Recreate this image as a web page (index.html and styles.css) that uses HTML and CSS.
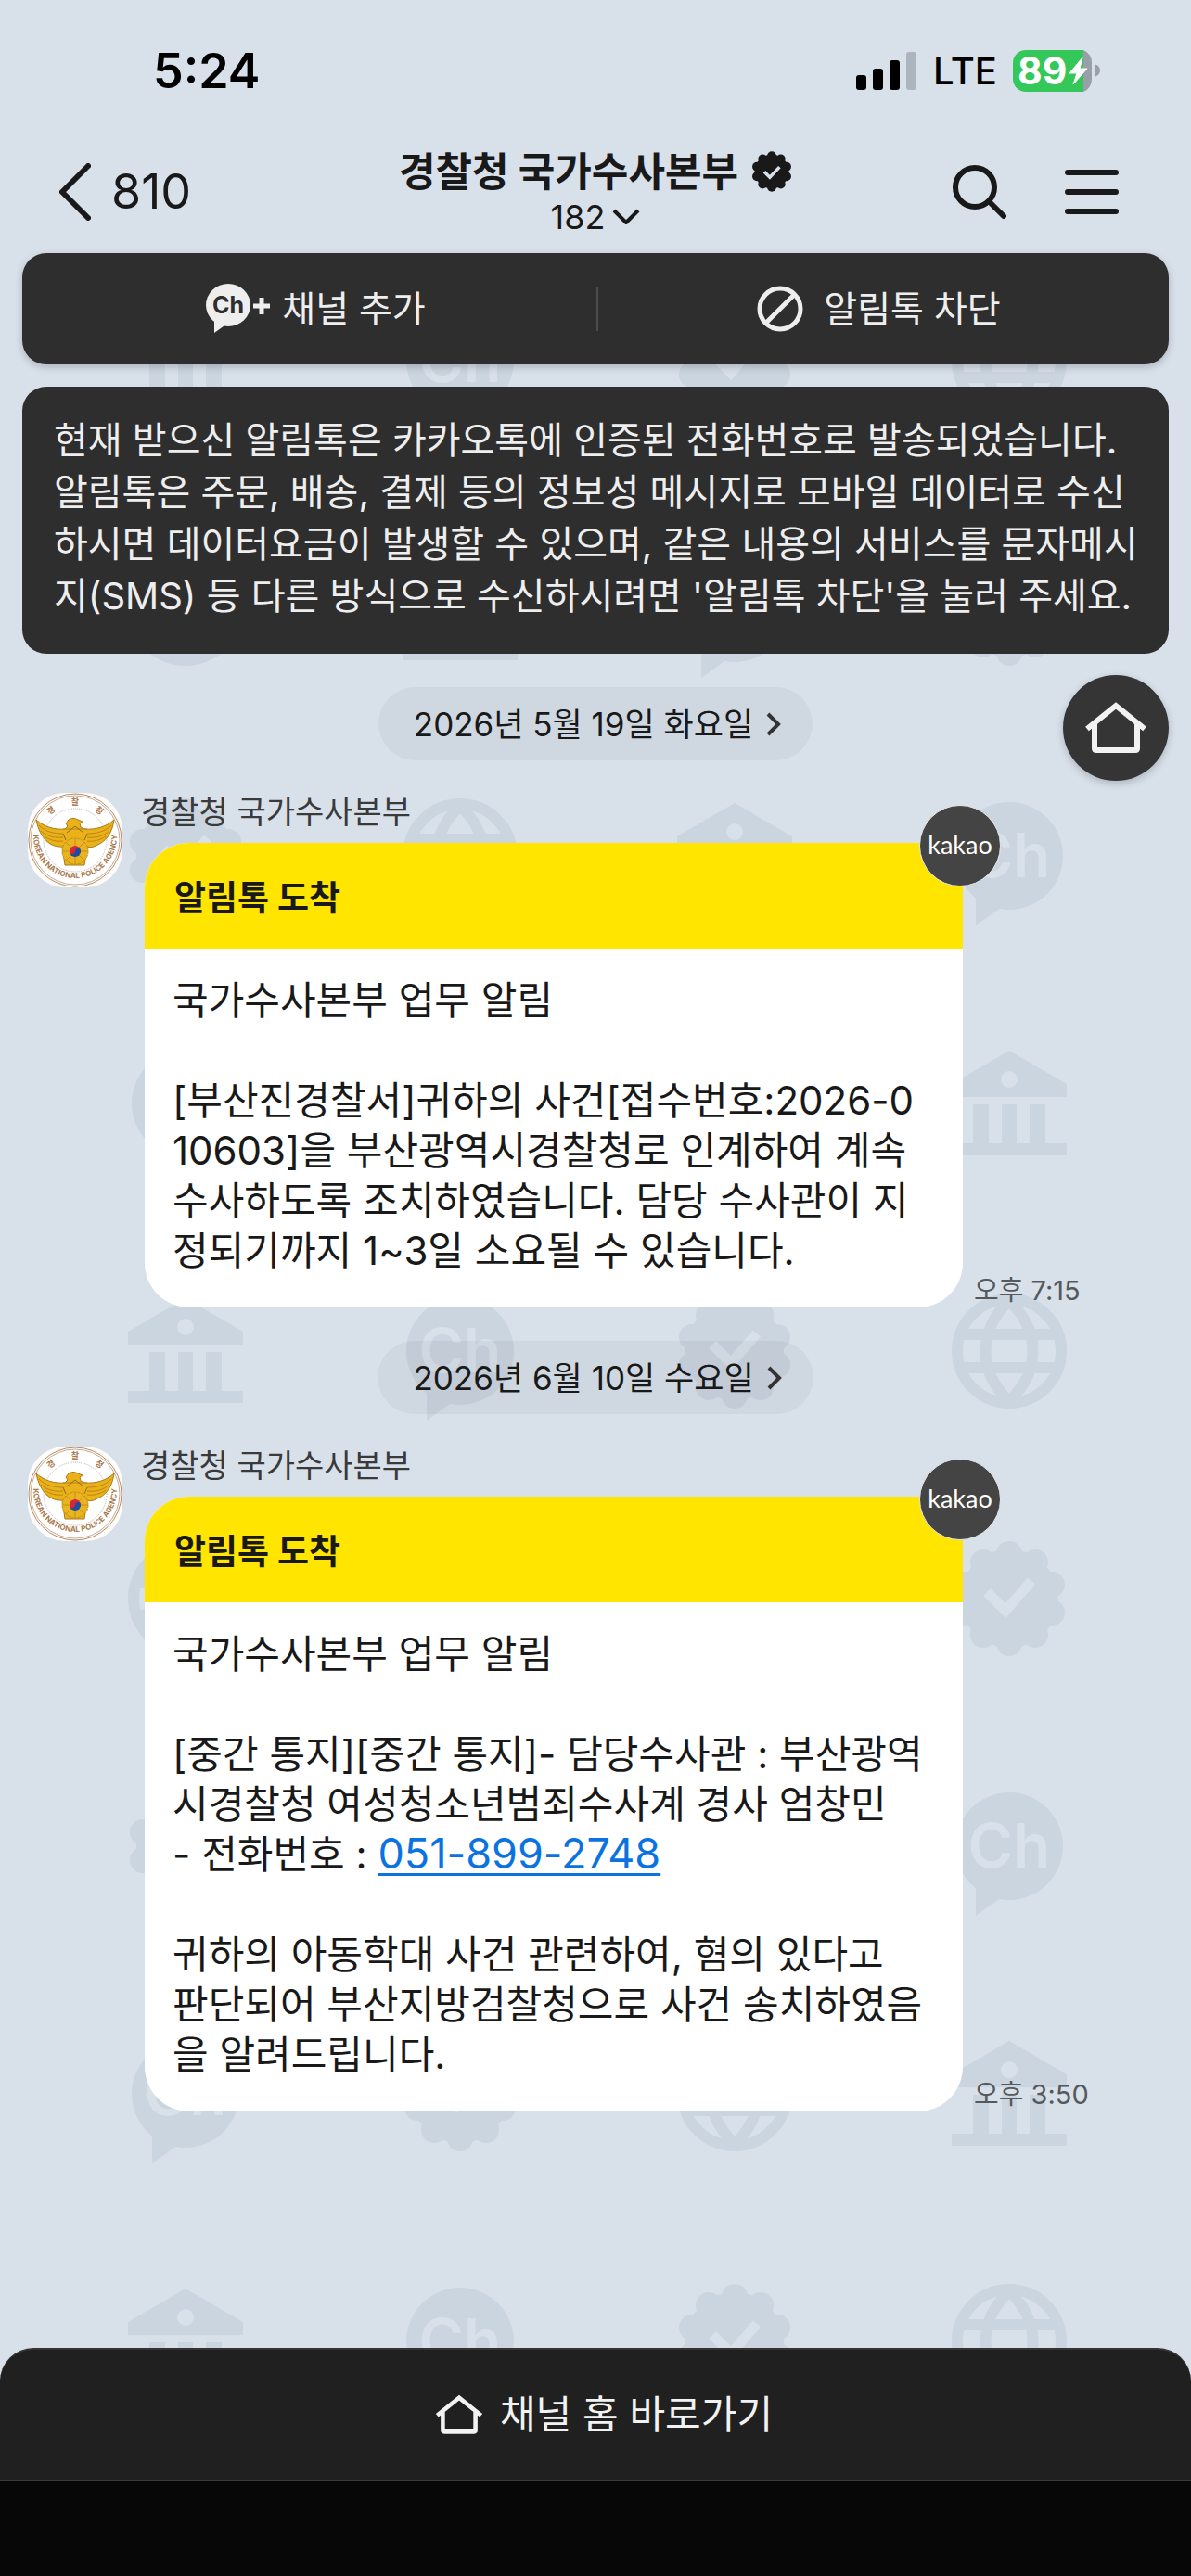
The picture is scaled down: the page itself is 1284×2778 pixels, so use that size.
FILE: index.html
```html
<!DOCTYPE html>
<html lang="ko">
<head>
	<meta charset="UTF-8">
	<meta name="viewport" content="width=device-width">
	<title>경찰청 국가수사본부</title>
	<link rel="stylesheet" href="styles.css">
</head>
<body>
	<svg class="defs" aria-hidden="true">
		<defs>
			<symbol id="home" viewBox="0 0 68 58">
				<path d="M3 30 34 5l31 25M11 25v26q0 2 2 2h42q2 0 2-2V25" fill="none" stroke="currentColor" stroke-width="6"/>
			</symbol>
			<g id="seal">
				<circle r="53"/>
				<circle cx="0" cy="-48" r="14"/><circle cx="28" cy="-39" r="14"/><circle cx="46" cy="-15" r="14"/>
				<circle cx="46" cy="15" r="14"/><circle cx="28" cy="39" r="14"/><circle cx="0" cy="48" r="14"/>
				<circle cx="-28" cy="39" r="14"/><circle cx="-46" cy="15" r="14"/><circle cx="-46" cy="-15" r="14"/><circle cx="-28" cy="-39" r="14"/>
			</g>
			<g id="w-seal">
				<use href="#seal"/>
				<path class="cut" d="m-24-7 20 20L24-19" stroke-width="11"/>
			</g>
			<g id="w-bank">
				<path d="M0-57 62-21V-7H-62V-21zM-39 1h17v42h-17zM-8 1H8v42H-8zM22 1h17v42H22zM-62 43H62V56H-62z"/>
				<circle class="hole" cy="-26" r="9"/>
			</g>
			<g id="w-ch">
				<circle r="58"/>
				<path d="M-36 40v35l28-20z"/>
				<text y="23">Ch</text>
			</g>
			<g id="w-globe">
				<circle r="56" class="line"/>
				<path class="line" d="M-52-18H52M-52 18H52M0-54C-34-22-34 22 0 54M0-54C34-22 34 22 0 54"/>
			</g>
			<pattern id="wall" x="52" y="-17" width="1184" height="1068" patternUnits="userSpaceOnUse">
				<use href="#w-bank" x="148" y="133"/><use href="#w-ch" x="444" y="133"/><use href="#w-seal" x="740" y="133"/><use href="#w-globe" x="1036" y="133"/>
				<use href="#w-globe" x="148" y="400"/><use href="#w-bank" x="444" y="400"/><use href="#w-ch" x="740" y="400"/><use href="#w-seal" x="1036" y="400"/>
				<use href="#w-seal" x="148" y="667"/><use href="#w-globe" x="444" y="667"/><use href="#w-bank" x="740" y="667"/><use href="#w-ch" x="1036" y="667"/>
				<use href="#w-ch" x="148" y="934"/><use href="#w-seal" x="444" y="934"/><use href="#w-globe" x="740" y="934"/><use href="#w-bank" x="1036" y="934"/>
			</pattern>
			<symbol id="emblem" viewBox="0 0 102 102">
				<rect width="102" height="102" rx="40" fill="#fefdfb"/>
				<circle cx="51" cy="51" r="50" fill="#fff" stroke="#b58a66" stroke-width="1"/>
				<circle cx="51" cy="51" r="48" fill="none" stroke="#c9a98b" stroke-width="1"/>
				<circle cx="51" cy="51" r="34" fill="none" stroke="#b9b0a8" stroke-width="1" stroke-dasharray="1 1"/>
				<path id="ring" d="M6 42a45 45 0 0 0 90 0" transform="translate(0 5)" fill="none"/>
				<text class="em-en"><textPath href="#ring" startOffset="50%">KOREAN NATIONAL POLICE AGENCY</textPath></text>
				<text class="em-ko" x="51" y="13">찰</text>
				<text class="em-ko" x="25" y="22" transform="rotate(-38 25 19)">경</text>
				<text class="em-ko" x="77" y="22" transform="rotate(38 77 19)">청</text>
				<path d="M9 29c9 8 20 11 31 10l3-3-2-3 3-4c3-2 7-2 10 0l5 2-3 2 1 4 4 2c12 1 23-2 32-10-2 15-9 24-20 28-3 2-7 2-9 1l-3 20H40l-3-20c-12 1-24-8-28-29z" fill="#eab119" stroke="#a87a18" stroke-width="1"/>
				<path d="M12 35c7 7 16 9 26 9M14 41c7 6 15 8 24 7M18 47c6 4 13 6 20 5M90 35c-7 7-16 9-26 9M88 41c-7 6-15 8-24 7M84 47c-6 4-13 6-20 5M38 39h26" fill="none" stroke="#b98518" stroke-width="1"/>
				<path d="m42 43 9-7 9 7M38 44l3 7M64 44l-3 7" fill="none" stroke="#8f6a1c" stroke-width="1"/>
				<circle cx="51" cy="63" r="14" fill="#e9b41f" stroke="#c3901a" stroke-width="1" stroke-dasharray="3 1"/>
				<path d="M51 49v28M37 63h28M41 53l20 20M61 53 41 73" stroke="#c3901a" stroke-width="1"/>
				<path d="M45 63a6 6 0 0 1 12 0z" fill="#d9243c"/>
				<path d="M45 63a6 6 0 0 0 12 0z" fill="#1c4e9c"/>
				<circle cx="48" cy="63" r="3" fill="#d9243c"/><circle cx="54" cy="63" r="3" fill="#1c4e9c"/>
			</symbol>
		</defs>
	</svg>

	<div class="status">
		<span class="clock">5:24</span>
		<div class="status-right">
			<svg width="66" height="42" viewBox="0 0 66 42">
				<rect y="25" width="11" height="16" rx="3"/><rect x="18" y="18" width="11" height="23" rx="3"/><rect x="36" y="9" width="11" height="32" rx="3"/><rect x="54" width="11" height="41" rx="3" fill="#acb4bd"/>
			</svg>
			<span class="lte">LTE</span>
			<svg class="battery" width="94" height="46" viewBox="0 0 94 46">
				<path d="M76 0a14 14 0 0 1 9 14v17a14 14 0 0 1-9 14z" fill="#989fa8"/>
				<path d="M14 0h62v45H14A14 14 0 0 1 0 31V14A14 14 0 0 1 14 0z" fill="#34c759"/>
				<path d="M88 15q6 2 6 7t-6 7z" fill="#989fa8"/>
				<text class="bat" x="5" y="37">89</text>
				<path d="M75 8 61 25h8l-4 12 15-17h-8z" fill="#fff" stroke="#fff" stroke-width="1" stroke-linejoin="round"/>
			</svg>
		</div>
	</div>

	<header class="head">
		<button class="back">
			<svg width="34" height="62" viewBox="0 0 34 62"><path d="M31 3 3 31l28 28"/></svg>
			810
		</button>
		<div class="title">
			<h1>경찰청 국가수사본부
				<svg width="44" height="44" viewBox="-63 -63 126 126"><use href="#seal" fill="#191919"/><path d="m-23 1 17 17L24-14" stroke="#d8e0ea" stroke-width="10"/></svg>
			</h1>
			<button class="count">182
				<svg width="30" height="18" viewBox="0 0 30 18"><path d="m2 2 13 13L28 2" stroke-width="4"/></svg>
			</button>
		</div>
		<div class="tools">
			<button aria-label="검색"><svg width="60" height="60" viewBox="0 0 60 60"><circle cx="25" cy="25" r="21"/><path d="m40 40 16 16"/></svg></button>
			<button aria-label="메뉴"><svg width="58" height="60" viewBox="0 0 58 60"><path d="M3 9h52M3 30h52M3 51h52"/></svg></button>
		</div>
	</header>

	<main class="chat">
		<svg class="wall" width="100%" height="100%" aria-hidden="true"><rect width="100%" height="100%" fill="url(#wall)"/></svg>

		<div class="actions">
			<button class="add">
				<svg width="70" height="54" viewBox="0 0 70 54"><ellipse cx="24" cy="23" rx="24" ry="23" fill="#eee"/><path d="M9 36v17l14-10z" fill="#eee"/><text class="ch" x="24" y="32">Ch</text><path d="M51 24h18M60 15v18" stroke="#eee" stroke-width="5"/></svg>
				채널 추가
			</button>
			<button class="block">
				<svg width="50" height="50" viewBox="0 0 50 50"><circle cx="25" cy="25" r="22" fill="none" stroke="#eee" stroke-width="5"/><path d="m10 40 30-30" stroke="#eee" stroke-width="5"/></svg>
				알림톡 차단
			</button>
		</div>

		<p class="notice">현재 받으신 알림톡은 카카오톡에 인증된 전화번호로 발송되었습니다.<br>알림톡은 주문, 배송, 결제 등의 정보성 메시지로 모바일 데이터로 수신<br>하시면 데이터요금이 발생할 수 있으며, 같은 내용의 서비스를 문자메시<br>지(SMS) 등 다른 방식으로 수신하시려면 '알림톡 차단'을 눌러 주세요.</p>

		<section class="log">
			<button class="fab" aria-label="홈"><svg width="68" height="58"><use href="#home"/></svg></button>

			<button class="date">2026년 5월 19일 화요일
				<svg width="18" height="26" viewBox="0 0 18 26"><path d="m3 2 11 11L3 24"/></svg>
			</button>

			<article class="msg">
				<svg class="avatar" width="102" height="102"><use href="#emblem"/></svg>
				<div class="msg-main">
					<div class="name">경찰청 국가수사본부</div>
					<div class="row">
						<div class="bubble">
							<h2>알림톡 도착</h2>
							<p>국가수사본부 업무 알림<br><br>[부산진경찰서]귀하의 사건[접수번호:2026-0<br>10603]을 부산광역시경찰청로 인계하여 계속<br>수사하도록 조치하였습니다. 담당 수사관이 지<br>정되기까지 1~3일 소요될 수 있습니다.</p>
							<span class="kakao">kakao</span>
						</div>
						<time>오후 7:15</time>
					</div>
				</div>
			</article>

			<button class="date">2026년 6월 10일 수요일
				<svg width="18" height="26" viewBox="0 0 18 26"><path d="m3 2 11 11L3 24"/></svg>
			</button>

			<article class="msg">
				<svg class="avatar" width="102" height="102"><use href="#emblem"/></svg>
				<div class="msg-main">
					<div class="name">경찰청 국가수사본부</div>
					<div class="row">
						<div class="bubble">
							<h2>알림톡 도착</h2>
							<p>국가수사본부 업무 알림<br><br>[중간 통지][중간 통지]- 담당수사관 : 부산광역<br>시경찰청 여성청소년범죄수사계 경사 엄창민<br>- 전화번호 : <a href="tel:051-899-2748">051-899-2748</a><br><br>귀하의 아동학대 사건 관련하여, 혐의 있다고<br>판단되어 부산지방검찰청으로 사건 송치하였음<br>을 알려드립니다.</p>
							<span class="kakao">kakao</span>
						</div>
						<time>오후 3:50</time>
					</div>
				</div>
			</article>
		</section>
	</main>

	<footer>
		<button class="go-home"><svg width="52" height="46"><use href="#home"/></svg>채널 홈 바로가기</button>
		<div class="bottom"></div>
	</footer>
</body>
</html>
```
FILE: styles.css
```css
*{box-sizing: border-box;margin: 0;padding: 0;}
body{display: flex;flex-direction: column;min-height: 100vh;background: #d8e0ea;color: #191919;font: 400 42px/54px Inter,"Noto Sans CJK KR",sans-serif;}
button{border: 0;background: none;color: inherit;font: inherit;cursor: pointer;}
svg{display: block;flex: none;}
.defs{position: absolute;width: 0;height: 0;}

/* status bar */
.status{display: flex;justify-content: space-between;align-items: center;height: 141px;padding: 13px 98px 0 165px;color: #000;}
.clock{font-size: 52px;font-weight: 600;}
.status-right{display: flex;align-items: center;gap: 17px;}
.lte{font-size: 40px;font-weight: 500;}
.battery{overflow: visible;}
.bat{font: 700 41px Inter,sans-serif;fill: #fff;}

/* header */
.head{display: grid;grid-template-columns: 1fr auto 1fr;align-items: center;height: 132px;padding: 0 78px;}
.head svg{fill: none;stroke: currentColor;stroke-width: 6px;stroke-linecap: round;stroke-linejoin: round;}
.back{display: flex;align-items: center;gap: 22px;justify-self: start;margin-left: -14px;font-size: 52px;}
.title{display: flex;flex-direction: column;align-items: center;}
.head h1{display: flex;align-items: center;gap: 14px;font-size: 43px;line-height: 54px;font-weight: 700;}
.head h1 svg{stroke: none;stroke-linecap: butt;stroke-linejoin: miter;}
.head .count{display: flex;align-items: center;gap: 8px;font-size: 36px;line-height: 44px;}
.head .count svg{stroke-linecap: butt;stroke-width: 4px;}
.tools{display: flex;gap: 62px;justify-self: end;}

/* chat */
.chat{position: relative;flex: 1;padding: 0 24px;}
.wall{position: absolute;top: 0;left: 0;}
#w-seal,#w-bank,#w-ch,#w-globe{fill: #cbd5df;}
.cut{fill: none;stroke: #d8e0ea;}
.hole{fill: #d8e0ea;}
.line{fill: none;stroke: #cbd5df;stroke-width: 12px;}
#w-ch text{font: 600 66px Inter,sans-serif;text-anchor: middle;fill: #d8e0ea;}

.actions,.notice,.log{position: relative;}
.actions{display: flex;align-items: center;height: 120px;border-radius: 26px;background: #2e2e2e;color: #eee;box-shadow: 0 3px 9px rgba(0,0,0,.2);font-size: 39px;}
.actions button{display: flex;flex: 1;align-items: center;justify-content: center;height: 48px;}
.actions .add{gap: 12px;padding-left: 14px;}
.actions .block{gap: 22px;padding-right: 10px;border-left: 2px solid #4c4c4c;}
.ch{font: 700 25px Inter,sans-serif;text-anchor: middle;fill: #2e2e2e;}
.notice{margin-top: 24px;padding: 30px 34px 34px;border-radius: 26px;background: #2e2e2e;color: #eee;font-size: 40px;line-height: 56px;white-space: nowrap;}

.fab{position: absolute;top: 23px;right: 0;display: flex;align-items: center;justify-content: center;width: 114px;height: 114px;border-radius: 50%;background: #353535;color: #f2f2f2;box-shadow: 0 3px 9px rgba(0,0,0,.2);}
.log{padding-top: 36px;}
.date{display: flex;align-items: center;gap: 13px;height: 79px;margin: 0 auto;padding: 0 33px 0 38px;border-radius: 40px;background: rgba(0,0,0,.04);font-size: 35px;}
.date svg{fill: none;stroke: #333;stroke-width: 4px;}
.msg{display: flex;gap: 24px;margin: 35px 0 36px 6px;}
.msg-main{flex: 1;}
.name{height: 54px;margin-left: -4px;font-size: 34px;line-height: 42px;color: #3a3a3a;}
.row{display: flex;align-items: flex-end;gap: 12px;}
.bubble{position: relative;width: 882px;border-radius: 48px;background: #fff;}
.bubble h2{height: 114px;padding: 0 32px;border-radius: 48px 48px 0 0;background: #ffe500;font-size: 37px;line-height: 120px;font-weight: 700;}
.bubble p{padding: 29px 30px 34px;white-space: nowrap;}
.bubble a{font-size: 45px;line-height: 1;color: #0b73e0;text-decoration: underline;text-decoration-thickness: 3px;text-underline-offset: 5px;}
.kakao{position: absolute;top: -41px;right: -41px;width: 88px;height: 88px;border: 1px solid #e6e8ea;border-radius: 50%;background: #444;color: #fff;font: 400 27px/84px Lato,sans-serif;text-align: center;}
time{font-size: 29px;line-height: 36px;color: #55595e;}

/* round police emblem */
.em-en{font: 700 8px Inter,sans-serif;text-anchor: middle;fill: #a8794c;}
.em-ko{font: 700 9px "Noto Sans CJK KR",sans-serif;text-anchor: middle;fill: #a8794c;}

/* footer */
footer{position: relative;background: #d8e0ea;}
.go-home{display: flex;align-items: center;justify-content: center;gap: 18px;width: 100%;height: 144px;padding-left: 18px;border-top: 2px solid #333;border-bottom: 2px solid #3a3a3a;border-radius: 36px 36px 0 0;background: #202020;color: #f2f2f2;}
.bottom{height: 102px;background: #070707;}
```
